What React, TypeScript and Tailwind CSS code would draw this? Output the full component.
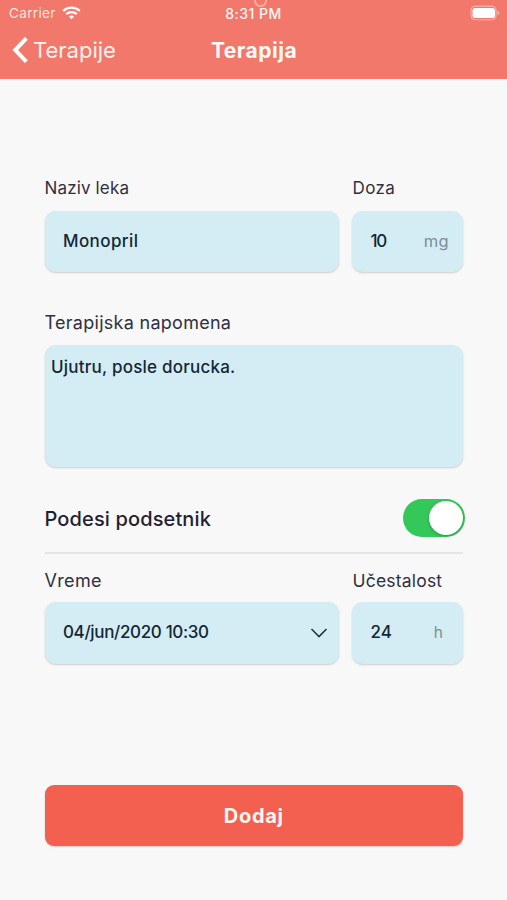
import React from 'react';

interface FieldProps {
  label: string;
  labelClass: string;
  className: string;
  children: React.ReactNode;
}

function Field({ label, labelClass, className, children }: FieldProps) {
  return (
    <div className={className}>
      <div className={`h-6 leading-[25px] whitespace-nowrap text-[#30303f] ${labelClass}`}>{label}</div>
      <div className="mt-[10.5px] h-[61.5px] pl-[18.5px] pr-[14px] flex items-center justify-between rounded-[11px] bg-[#d4edf4] shadow-[0_1px_2px_rgba(0,0,0,0.18)] text-[17px] font-medium whitespace-nowrap text-[#142735]">
        {children}
      </div>
    </div>
  );
}

export default function App() {
  const [reminder, setReminder] = React.useState(true);

  return (
    <div className="w-full h-[900px] overflow-hidden bg-[#f8f8f8] font-['Inter',sans-serif]">
      {/* Header */}
      <header className="relative h-[79px] bg-[#f1786b] text-white">
        <svg className="absolute left-[252px] top-0" width="17" height="8" viewBox="0 0 17 8" fill="none">
          <circle cx="8.5" cy="0.5" r="5.6" stroke="#f8aaa0" strokeWidth="2" />
        </svg>

        <div className="h-[27px] pl-[9px] pr-[6px] grid grid-cols-[1fr_auto_1fr] items-center text-[13.5px] leading-none">
          <div className="flex items-center gap-[6px] text-[#ffe4df]">
            <span className="pt-px tracking-[0.35px]">Carrier</span>
            <svg className="-mt-px" width="19" height="14" viewBox="0 0 19 14" fill="none" stroke="white" strokeWidth="2.3">
              <path d="M1.2 4.9C5.8 0.4 13.2 0.4 17.8 4.9" />
              <path d="M4.3 8.2C7.2 5.4 11.8 5.4 14.7 8.2" />
              <path d="M6.8 10.5C8.3 9.1 10.7 9.1 12.2 10.5L9.5 13.3Z" fill="white" stroke="none" />
            </svg>
          </div>
          <span className="pr-[3px] pt-px text-[14px] font-medium tracking-[0.5px] text-[#fff5f1]">8:31 PM</span>
          <svg className="-mt-px justify-self-end" width="31" height="16" viewBox="0 0 31 16">
            <rect x="1" y="1.2" width="25" height="13.4" rx="4" fill="none" stroke="#f7a99f" strokeWidth="1.4" />
            <rect x="2.5" y="3" width="22.5" height="10" rx="2.5" fill="white" />
            <path d="M27.5 5.5C29.8 6.3 29.8 9.3 27.5 10.1Z" fill="#f9bbb3" />
          </svg>
        </div>

        <div className="h-[46px] pl-[12px] grid grid-cols-[1fr_auto_1fr] items-center">
          <button className="flex items-center gap-[5px] text-[22px] text-[#fff1ec]">
            <svg width="16" height="26" viewBox="0 0 16 26" fill="none" stroke="white" strokeWidth="4">
              <path d="M14.4 1.3L3.2 13L14.4 24.7" />
            </svg>
            <span className="leading-none">Terapije</span>
          </button>
          <h1 className="pr-[11px] text-[21px] font-bold leading-none tracking-[0.5px] text-[#fffaf5]">Terapija</h1>
        </div>
      </header>

      <main className="pt-[97px] pl-[44.5px] pr-[44px]">
        {/* Medicine */}
        <div className="flex gap-[13.5px]">
          <Field label="Naziv leka" labelClass="text-[17px] tracking-[0.15px]" className="flex-1">
            <span className="tracking-[0.4px]">Monopril</span>
          </Field>
          <Field label="Doza" labelClass="pl-[0.5px] text-[17px] tracking-[0.4px]" className="w-[111px]">
            <span className="tracking-[-1.2px]">10</span>
            <span className="pt-px text-[16.5px] font-normal tracking-[0.3px] text-[#7d8e96]">mg</span>
          </Field>
        </div>

        {/* Note */}
        <div className="mt-[38px]">
          <div className="h-6 leading-[25px] text-[18px] tracking-[0.28px] text-[#30303f]">Terapijska napomena</div>
          <div className="mt-[10.5px] h-[122.5px] px-[6.5px] pt-[10px] rounded-[11px] bg-[#d4edf4] shadow-[0_1px_2px_rgba(0,0,0,0.18)] text-[17px] leading-6 font-medium tracking-[0.22px] text-[#142735]">
            <span>Ujutru, posle dorucka.</span>
          </div>
        </div>

        {/* Reminder */}
        <div className="mt-[32px] h-[38px] flex items-center justify-between">
          <span className="pt-px text-[20px] font-medium leading-none tracking-[0.13px] text-[#1f1f33]">Podesi podsetnik</span>
          <button
            role="switch"
            aria-checked={reminder}
            onClick={() => setReminder(!reminder)}
            className={`-mr-[2px] w-[62.5px] h-[38px] p-[2px] flex items-center rounded-full ${reminder ? 'justify-end bg-[#34c759]' : 'justify-start bg-gray-300'}`}
          >
            <span className="w-[34px] h-[34px] rounded-full bg-white shadow-[0_1px_3px_rgba(0,0,0,0.25)]" />
          </button>
        </div>
        <div className="mt-[15px] h-[2px] bg-[#e5e5e6]" />

        <div className="mt-[13.5px] flex gap-[13.5px]">
          <Field label="Vreme" labelClass="text-[18px] tracking-[0.35px]" className="flex-1">
            <span className="tracking-[-0.35px]">04/jun/2020 10:30</span>
            <svg className="-mr-[3px]" width="18" height="12" viewBox="0 0 18 12" fill="none" stroke="#203440" strokeWidth="1.6">
              <path d="M1.5 2L9 9.5L16.5 2" />
            </svg>
          </Field>
          <Field label="Učestalost" labelClass="pl-[0.5px] text-[17.5px] tracking-[0.2px]" className="w-[111px]">
            <span>24</span>
            <span className="pr-[6px] text-[15.5px] font-normal text-[#7d8e96]">h</span>
          </Field>
        </div>

        <button className="mt-[121.5px] w-full h-[61px] rounded-[9px] bg-[#f4604f] shadow-[0_1px_2px_rgba(0,0,0,0.2)] text-[20px] font-bold tracking-[0.7px] text-[#fff8f2]">
          Dodaj
        </button>
      </main>
    </div>
  );
}
